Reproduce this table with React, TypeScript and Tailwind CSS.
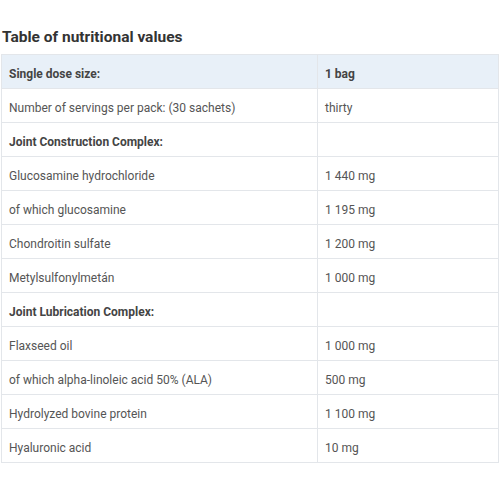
import React from "react";

const rows: { a: string; b: string; bold?: boolean; head?: boolean }[] = [
  { a: "Single dose size:", b: "1 bag", bold: true, head: true },
  { a: "Number of servings per pack: (30 sachets)", b: "thirty" },
  { a: "Joint Construction Complex:", b: "", bold: true },
  { a: "Glucosamine hydrochloride", b: "1 440 mg" },
  { a: "of which glucosamine", b: "1 195 mg" },
  { a: "Chondroitin sulfate", b: "1 200 mg" },
  { a: "Metylsulfonylmetán", b: "1 000 mg" },
  { a: "Joint Lubrication Complex:", b: "", bold: true },
  { a: "Flaxseed oil", b: "1 000 mg" },
  { a: "of which alpha-linoleic acid 50% (ALA)", b: "500 mg" },
  { a: "Hydrolyzed bovine protein", b: "1 100 mg" },
  { a: "Hyaluronic acid", b: "10 mg" },
];

export default function App() {
  return (
    <div className="w-[500px] h-[500px] bg-white" style={{ fontFamily: "Roboto, 'Liberation Sans', sans-serif" }}>
      <h2 className="pt-[28px] pl-[2px] text-[15.5px] leading-[18px] font-bold text-[#333]">Table of nutritional values</h2>
      <table className="mt-[8px] ml-px w-[498px] border-collapse text-[12px]">
        <tbody>
          {rows.map((r, i) => (
            <tr key={i} className={r.head ? "bg-[#e8f0f8]" : "bg-white"}>
              <td className={`w-[316px] h-[34px] border border-[#e3e6ea] pl-[7px] pr-[7px] pt-[4px] pb-0 align-middle ${r.bold ? "font-bold text-[#444]" : "text-[#555]"}`}>{r.a}</td>
              <td className={`h-[34px] border border-[#e3e6ea] pl-[7px] pr-[7px] pt-[4px] pb-0 align-middle ${r.bold ? "font-bold text-[#444]" : "text-[#555]"}`}>{r.b}</td>
            </tr>
          ))}
        </tbody>
      </table>
    </div>
  );
}
